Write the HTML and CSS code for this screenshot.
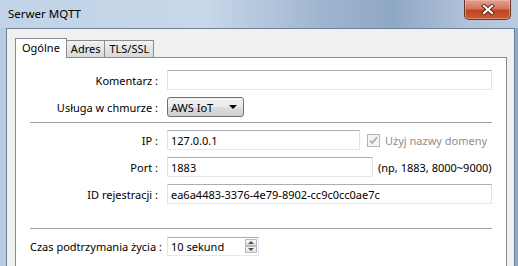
FILE: index.html
```html
<!DOCTYPE html>
<html lang="pl">
<head>
    <meta charset="UTF-8">
    <meta name="viewport" content="width=device-width, initial-scale=1.0">
    <title>Serwer MQTT</title>
    <link rel="stylesheet" href="styles.css">
</head>
<body>
    <div class="window">
        <div class="titlebar">
            <span class="title">Serwer MQTT</span>
            <button class="close" title="Zamknij">
                <svg width="14" height="11" viewBox="0 0 14 11">
                    <path d="M3 2 L11 9 M11 2 L3 9" stroke="#5a2418" stroke-width="4" stroke-linecap="square"/>
                    <path d="M3 2 L11 9 M11 2 L3 9" stroke="#fff" stroke-width="2.2" stroke-linecap="square"/>
                </svg>
            </button>
        </div>
        <div class="frame">
            <div class="client">
                <div class="tabs">
                    <div class="tab active">Ogólne</div>
                    <div class="tab">Adres</div>
                    <div class="tab">TLS/SSL</div>
                </div>
                <div class="panel">
                    <div class="row">
                        <label class="lbl" for="comment">Komentarz :</label>
                        <input class="text grow" type="text" id="comment" value="">
                    </div>
                    <div class="row">
                        <label class="lbl">Usługa w chmurze :</label>
                        <div class="combo">
                            <span>AWS IoT</span>
                            <span class="arrow"></span>
                        </div>
                    </div>

                    <div class="sep sep-top"></div>

                    <div class="row">
                        <label class="lbl" for="ip">IP :</label>
                        <input class="text ip" type="text" id="ip" value="127.0.0.1">
                        <span class="check">
                            <svg width="13" height="13" viewBox="0 0 13 13">
                                <rect x="0.5" y="0.5" width="12" height="12" fill="#f4f4f4" stroke="#b5b5b5"/>
                                <path d="M3 6.5 L5.3 9 L10 3.2" fill="none" stroke="#a9a9a9" stroke-width="1.6"/>
                            </svg>
                        </span>
                        <span class="disabled">Użyj nazwy domeny</span>
                    </div>
                    <div class="row">
                        <label class="lbl" for="port">Port :</label>
                        <input class="text port" type="text" id="port" value="1883">
                        <span class="hint">(np, 1883, 8000~9000)</span>
                    </div>
                    <div class="row">
                        <label class="lbl" for="regid">ID rejestracji :</label>
                        <input class="text grow" type="text" id="regid" value="ea6a4483-3376-4e79-8902-cc9c0cc0ae7c">
                    </div>

                    <div class="sep sep-bottom"></div>

                    <div class="row spin-row">
                        <label class="lbl">Czas podtrzymania życia :</label>
                        <div class="spin">
                            <span>10 sekund</span>
                            <span class="spin-btns">
                                <span class="spin-btn up"></span>
                                <span class="spin-btn down"></span>
                            </span>
                        </div>
                    </div>
                </div>
            </div>
        </div>
    </div>
</body>
</html>
```

FILE: styles.css
```css
html, body {
    margin: 0;
    height: 100%;
    overflow: hidden;
}
body {
    font-family: "Noto Sans", "Open Sans", sans-serif;
    font-size: 11px;
    color: #000;
}
.window {
    height: 266px;
    overflow: hidden;
    display: flex;
    flex-direction: column;
    background: linear-gradient(to right, #c2d3e7 0%, #c8d7e9 40%, #9fb5cf 62%, #8fa8c5 76%, #b0c2d8 90%, #bccbdd 100%);
}
.titlebar {
    height: 28px;
    display: flex;
    align-items: flex-start;
    flex-shrink: 0;
}
.title {
    margin: 6px 0 0 8px;
    line-height: 16px;
    font-size: 11.5px;
    color: #000;
}
.close {
    margin-left: auto;
    margin-right: 7px;
    width: 47px;
    height: 20px;
    padding: 0;
    border: 1px solid #6b3527;
    border-top: none;
    border-radius: 0 0 5px 5px;
    background: linear-gradient(#e0a293 0%, #d3755c 45%, #c04520 55%, #c85b38 100%);
    box-shadow: inset 0 0 0 1px rgba(255, 200, 180, 0.45);
    display: flex;
    align-items: center;
    justify-content: center;
}
.frame {
    flex: 1;
    min-height: 0;
    padding: 0 6px;
    display: flex;
    background: linear-gradient(to right, #b6cae1 0, #b6cae1 6px, transparent 6px, transparent calc(100% - 6px), #8fa9c8 calc(100% - 6px));
}
.client {
    flex: 1;
    background: #f0f0f0;
    border: 1px solid #6f819a;
    border-bottom: none;
    padding: 9px 7px 0 8px;
}

/* tabs */
.tabs {
    display: flex;
    align-items: flex-end;
    height: 20px;
    margin-bottom: -1px;
    position: relative;
    z-index: 1;
}
.tab {
    height: 16px;
    line-height: 15px;
    padding: 0 4px;
    margin-bottom: 1px;
    border: 1px solid #898c95;
    border-bottom: none;
    background: linear-gradient(#f3f3f3, #e3e3e3 50%, #d9d9d9);
    color: #000;
    margin-left: -1px;
}
.tab.active {
    height: 19px;
    line-height: 18px;
    margin-bottom: 0;
    margin-left: 0;
    padding: 0 6px 0 6px;
    background: #fff;
}
.panel {
    background: #fff;
    border: 1px solid #898c95;
    border-bottom: none;
    height: 300px;
    padding: 12px 14px 0 14px;
}

/* form rows */
.row {
    display: flex;
    align-items: center;
    height: 20px;
    margin-bottom: 7px;
    white-space: nowrap;
}
.lbl {
    width: 128px;
    margin-right: 9px;
    text-align: right;
    flex-shrink: 0;
}
.spin-row .lbl {
    text-align: left;
}
.text {
    box-sizing: border-box;
    height: 20px;
    margin: 0;
    padding: 0 3px;
    font: inherit;
    color: #000;
    border: 1px solid #e2e3ea;
    border-top-color: #abadb3;
    border-bottom-color: #e3e9ef;
    background: #fff;
    outline: none;
}
.grow {
    flex: 1;
    min-width: 0;
}
.ip {
    width: 193px;
}
.port {
    width: 206px;
}
.combo {
    box-sizing: border-box;
    width: 77px;
    height: 20px;
    border: 1px solid #707070;
    border-radius: 3px;
    background: linear-gradient(#f2f2f2, #ebebeb 50%, #dddddd 51%, #cfcfcf);
    display: flex;
    align-items: center;
    padding: 0 6px 0 3px;
}
.arrow {
    margin-left: auto;
    width: 0;
    height: 0;
    border-left: 4px solid transparent;
    border-right: 4px solid transparent;
    border-top: 4px solid #000;
}
.check {
    display: flex;
    margin: 0 5px 0 7px;
}
.disabled {
    color: #8d8d8d;
}
.hint {
    margin-left: 5px;
}
.sep {
    border-top: 1px solid #a0a0a0;
}
.sep-top {
    margin: -2px 0 7px;
}
.sep-bottom {
    margin: 24px 0 7px;
}
.spin {
    box-sizing: border-box;
    width: 92px;
    height: 19px;
    border: 1px solid #e2e3ea;
    border-top-color: #abadb3;
    border-bottom-color: #e3e9ef;
    display: flex;
    align-items: center;
    padding-left: 3px;
}
.spin-btns {
    margin-left: auto;
    margin-right: 1px;
    display: flex;
    flex-direction: column;
}
.spin-btn {
    box-sizing: border-box;
    width: 12px;
    height: 7px;
    border: 1px solid #b6b9c0;
    background: linear-gradient(#f6f6f6, #e2e2e2);
    display: flex;
    align-items: center;
    justify-content: center;
}
.spin-btn::after {
    content: "";
    border-left: 3px solid transparent;
    border-right: 3px solid transparent;
}
.spin-btn.up::after {
    border-bottom: 3px solid #4d4d4d;
}
.spin-btn.down::after {
    border-top: 3px solid #4d4d4d;
}
```
